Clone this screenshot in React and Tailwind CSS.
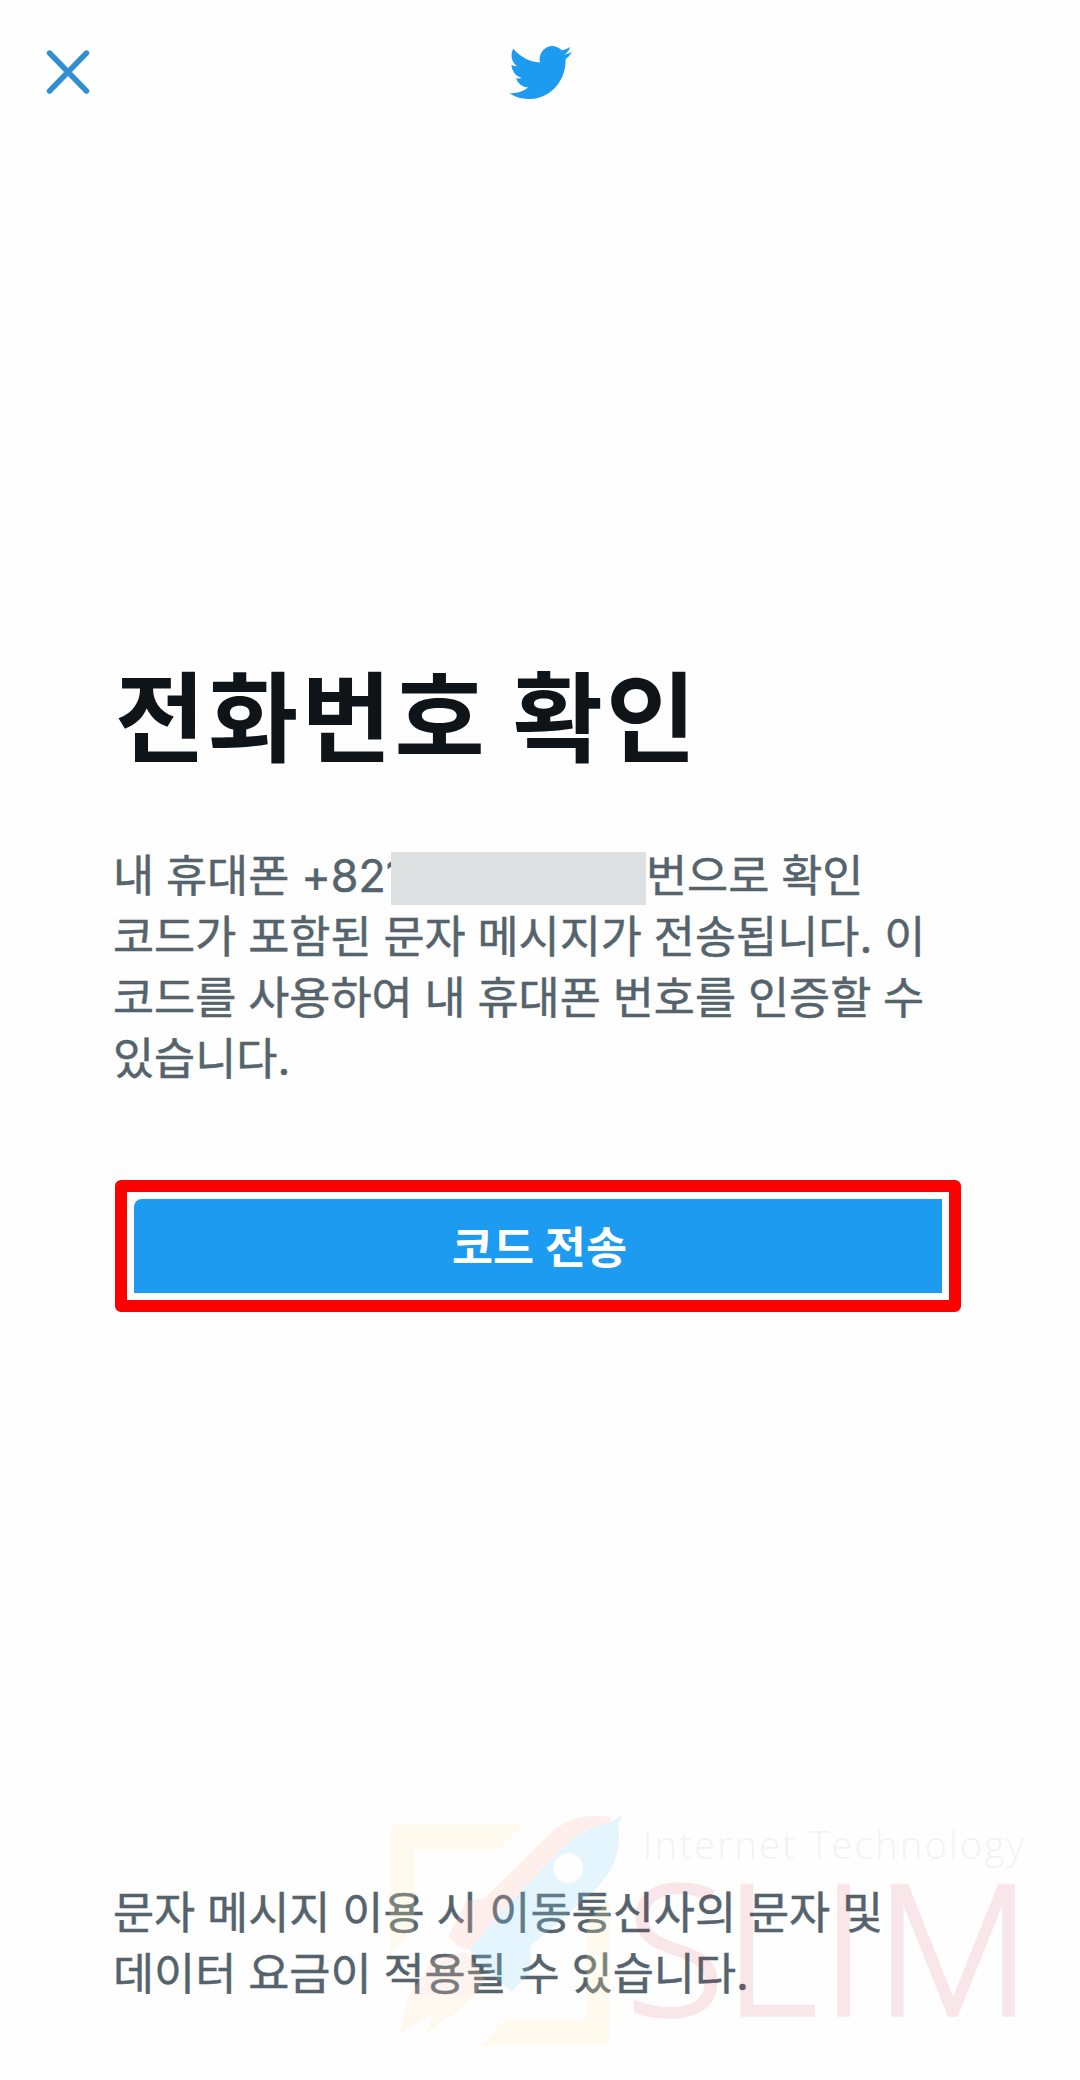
import React from "react";

const CloseIcon = () => (
  <svg viewBox="0 0 44 44" className="h-11 w-11" fill="none">
    <path
      d="M3.5 3L40.5 41M40.5 3L3.5 41"
      stroke="#2f8fd0"
      strokeWidth="5.4"
      strokeLinecap="round"
    />
  </svg>
);

const BirdLogo = () => (
  <svg
    viewBox="0 2.25 24 19.5"
    preserveAspectRatio="none"
    className="ml-[2px] h-[53px] w-[63px]"
    fill="#1d9bf0"
  >
    <path d="M23.953 4.57a10 10 0 01-2.825.775 4.958 4.958 0 002.163-2.723c-.951.555-2.005.959-3.127 1.184a4.92 4.92 0 00-8.384 4.482C7.69 8.095 4.067 6.13 1.64 3.162a4.822 4.822 0 00-.666 2.475c0 1.71.87 3.213 2.188 4.096a4.904 4.904 0 01-2.228-.616v.06a4.923 4.923 0 003.946 4.827 4.996 4.996 0 01-2.212.085 4.936 4.936 0 004.604 3.417 9.867 9.867 0 01-6.102 2.105c-.39 0-.779-.023-1.17-.067a13.995 13.995 0 007.557 2.209c9.053 0 13.998-7.496 13.998-13.985 0-.21 0-.42-.015-.63A9.935 9.935 0 0024 4.59z" />
  </svg>
);

// Translucent site mark laid over the bottom of the page
const Watermark = () => (
  <svg
    viewBox="0 0 2100 810"
    className="pointer-events-none absolute left-[370px] top-[1800px] h-[270px] w-[700px]"
  >
    <g opacity="0.22">
      <path
        fill="#fff0b4"
        d="M460 73H82Q60 73 60 95V465L133 390V150H385ZM718 300V715Q718 737 696 737H330L405 657H650V370Z"
      />
      <path
        fill="#ffb8b0"
        d="M722 52C640 38 580 60 530 110L345 295L290 302L235 410L265 440L300 450L560 165L725 75Z"
      />
      <path fill="#ffcfb8" d="M190 475L288 457L345 540L310 590L240 650L185 580L115 595Z" />
      <path fill="#ffe6b8" d="M115 595L185 580L310 590L165 705L188 645L88 700Z" />
      <path
        fill="#8ad6ff"
        fillRule="evenodd"
        d="M760 42L718 68C650 85 605 110 560 165L380 350L300 450L350 510L425 575L478 520Q485 490 480 440L520 405L640 300C735 225 755 150 745 75ZM595 160A45 45 0 1 0 595 250A45 45 0 1 0 595 160Z"
      />
    </g>
    <text
      x="818"
      y="178"
      fontFamily="'Open Sans', sans-serif"
      fontWeight="300"
      fontSize="115"
      textLength="1144"
      fill="#000"
      opacity="0.045"
    >
      Internet Technology
    </text>
    <text
      x="768 1062 1352 1514"
      y="644"
      fontFamily="'Open Sans', sans-serif"
      fontWeight="300"
      fontSize="545"
      fill="#d71f30"
      stroke="#d71f30"
      strokeWidth="11"
      opacity="0.1"
    >
      SLIM
    </text>
  </svg>
);

const App = () => {
  return (
    <div className="relative flex h-[2080px] w-[1080px] flex-col overflow-hidden bg-[#fefefe] font-['Inter','Noto_Sans_CJK_KR',sans-serif] text-[#54636c]">
      <header className="grid h-[144px] grid-cols-3 items-center px-[46px]">
        <CloseIcon />
        <div className="flex justify-center">
          <BirdLogo />
        </div>
      </header>

      <main className="flex flex-col px-[113px] pt-[503px]">
        <h1 className="ml-[2px] whitespace-nowrap text-[98px] font-bold leading-[144px] tracking-[3px] text-[#0f1419] [word-spacing:-1px]">
          전화번호 확인
        </h1>
        <p className="mt-[55px] whitespace-nowrap text-[44.7px] leading-[61px] [-webkit-text-stroke:0.5px_#54636c] [word-spacing:-0.7px]">
          <span className="flex h-[61px] items-center">
            <span className="w-[278px]">내 휴대폰 +821</span>
            {/* masks the rest of the phone number */}
            <span className="relative mt-[3px] h-[53px] w-[255px] bg-[#dce0e1]" />
            <span>번으로 확인</span>
          </span>
          코드가 포함된 문자 메시지가 전송됩니다. 이
          <br />
          코드를 사용하여 내 휴대폰 번호를 인증할 수
          <br />
          있습니다.
        </p>
        <div className="ml-[2px] mt-[90px] w-[846px] rounded-md border-12 border-[#fe0000] p-[7px]">
          <button className="flex h-[94px] w-full items-center justify-center rounded-tl-lg bg-[#1d9bf0] pl-[3px] pt-[6px] text-[44.7px] font-bold text-white">
            코드 전송
          </button>
        </div>
      </main>

      <footer className="mt-auto whitespace-nowrap px-[113px] pb-[75px] text-[44.7px] leading-[61px] [-webkit-text-stroke:0.5px_#54636c] [word-spacing:-0.7px]">
        문자 메시지 이용 시 이동통신사의 문자 및
        <br />
        데이터 요금이 적용될 수 있습니다.
      </footer>

      <Watermark />
    </div>
  );
};

export default App;
